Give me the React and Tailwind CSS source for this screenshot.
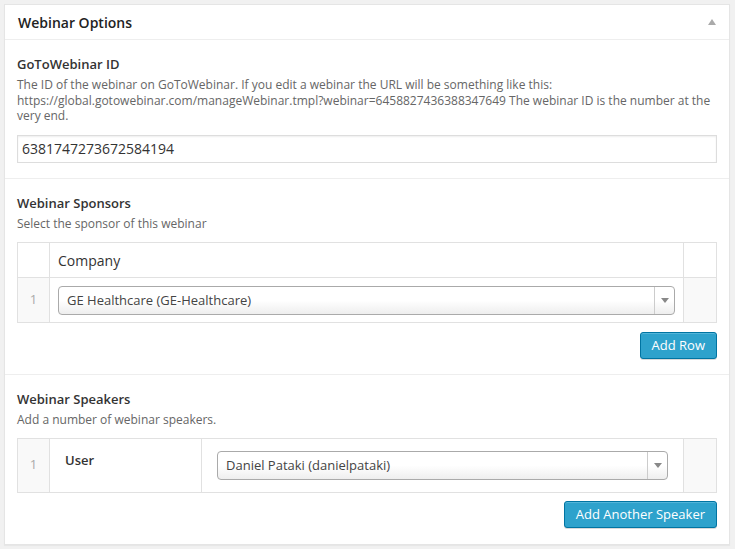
import React from "react";

function Select({ value }) {
  return (
    <div className="flex h-[29px] w-full items-stretch rounded-[4px] border border-[#aaa] bg-gradient-to-b from-white from-50% to-[#eee] text-[13px] text-[#444]">
      <div className="flex flex-1 items-center pl-[8px] leading-none">{value}</div>
      <div className="flex w-[20px] items-center justify-center border-l border-[#ccc]">
        <svg width="8" height="5" viewBox="0 0 8 5"><path d="M0 0h8L4 5z" fill="#888" /></svg>
      </div>
    </div>
  );
}

function Button({ children }) {
  return (
    <div className="flex justify-end">
      <button className="h-[27px] rounded-[3px] border border-[#0074a2] bg-[#2ea2cc] px-[11px] text-[13px] leading-none text-white shadow-[inset_0_1px_0_rgba(120,200,230,0.5),0_1px_0_rgba(0,0,0,0.15)]">
        {children}
      </button>
    </div>
  );
}

export default function App() {
  return (
    <div className="min-h-screen bg-[#f1f1f1] pt-[4px] pl-[4px]" style={{ fontFamily: '"Open Sans", sans-serif' }}>
      <div className="w-[726px] border border-[#e5e5e5] bg-white shadow-[0_1px_1px_rgba(0,0,0,0.04)]">
        {/* header */}
        <div className="flex h-[35px] items-center justify-between border-b border-[#eee] pl-[13px] pr-[13px]">
          <div className="text-[14px] font-semibold text-[#222]">Webinar Options</div>
          <svg width="8" height="6" viewBox="0 0 8 6"><path d="M4 0L8 6H0z" fill="#aaa" /></svg>
        </div>

        {/* section 1 */}
        <div className="border-b border-[#eee] px-[12px] pt-[15px] pb-[15px]">
          <div className="text-[13px] leading-[18px] font-semibold text-[#333]">GoToWebinar ID</div>
          <div className="mt-[4px] text-[12px] leading-[15.5px] text-[#666]">
            The ID of the webinar on GoToWebinar. If you edit a webinar the URL will be something like this: https://global.gotowebinar.com/manageWebinar.tmpl?webinar=6458827436388347649 The webinar ID is the number at the very end.
          </div>
          <div className="mt-[11px] flex h-[28px] items-center border border-[#ddd] pl-[4px] text-[14px] text-[#333] shadow-[inset_0_1px_2px_rgba(0,0,0,0.07)]">
            6381747273672584194
          </div>
        </div>

        {/* section 2 */}
        <div className="border-b border-[#eee] px-[12px] pt-[15px] pb-[15px]">
          <div className="text-[13px] leading-[18px] font-semibold text-[#333]">Webinar Sponsors</div>
          <div className="mt-[4px] text-[12px] leading-[15.5px] text-[#666]">Select the sponsor of this webinar</div>
          <div className="mt-[11px] border border-[#e1e1e1]">
            <div className="flex h-[34px]">
              <div className="w-[32px] border-r border-[#e1e1e1]" />
              <div className="flex flex-1 items-center pl-[8px] text-[14px] text-[#333]">Company</div>
              <div className="w-[33px] border-l border-[#e1e1e1]" />
            </div>
            <div className="flex h-[45px] border-t border-[#e1e1e1]">
              <div className="flex w-[32px] items-center justify-center border-r border-[#e1e1e1] bg-[#f9f9f9] text-[13px] text-[#aaa]">1</div>
              <div className="flex flex-1 items-center px-[8px]">
                <Select value="GE Healthcare (GE-Healthcare)" />
              </div>
              <div className="w-[33px] border-l border-[#e1e1e1] bg-[#f9f9f9]" />
            </div>
          </div>
          <div className="mt-[9px]">
            <Button>Add Row</Button>
          </div>
        </div>

        {/* section 3 */}
        <div className="px-[12px] pt-[15px] pb-[16px]">
          <div className="text-[13px] leading-[18px] font-semibold text-[#333]">Webinar Speakers</div>
          <div className="mt-[4px] text-[12px] leading-[15.5px] text-[#666]">Add a number of webinar speakers.</div>
          <div className="mt-[10px] flex h-[55px] border border-[#e1e1e1]">
            <div className="flex w-[32px] items-center justify-center border-r border-[#e1e1e1] bg-[#f9f9f9] text-[13px] text-[#aaa]">1</div>
            <div className="w-[152px] border-r border-[#e1e1e1] px-[15px] pt-[12px] text-[13px] leading-[18px] font-semibold text-[#333]">User</div>
            <div className="flex-1 px-[15px] pt-[12px]">
              <Select value="Daniel Pataki (danielpataki)" />
            </div>
            <div className="w-[33px] border-l border-[#e1e1e1] bg-[#f9f9f9]" />
          </div>
          <div className="mt-[8px]">
            <Button>Add Another Speaker</Button>
          </div>
        </div>
      </div>
    </div>
  );
}
